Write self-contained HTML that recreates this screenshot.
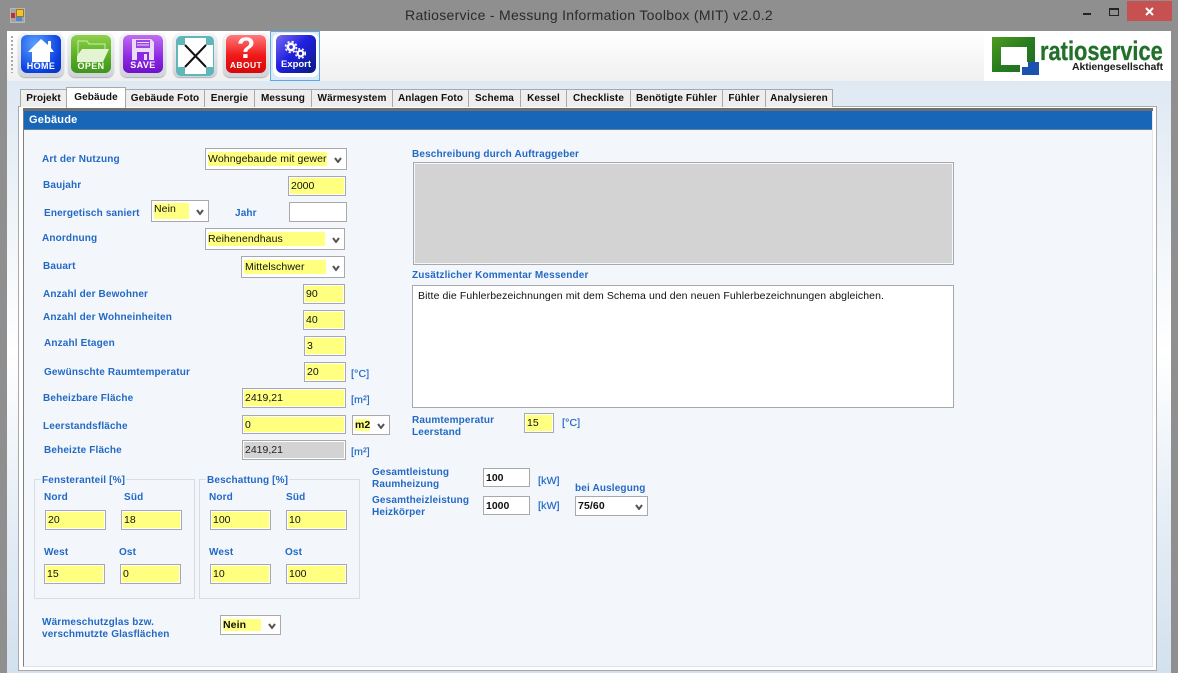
<!DOCTYPE html>
<html lang="de"><head><meta charset="utf-8"><title>Ratioservice</title>
<style>
html,body{margin:0;padding:0}
body{width:1178px;height:673px;overflow:hidden;position:relative;background:#8f8f8f;font-family:"Liberation Sans",sans-serif}
div,span,svg{position:absolute;box-sizing:border-box}
.l{color:#2369c4;font-weight:bold;font-size:10px;line-height:12px;height:12px;white-space:nowrap;letter-spacing:.15px;margin-top:1px}
.u{font-weight:normal;font-size:10.5px;letter-spacing:.2px;-webkit-text-stroke:.2px #2369c4;margin-top:0}
.f{border:1px solid #a9a9ab;background:#fff}
.f b,.f i{position:absolute;left:1px;top:1px;bottom:1px;right:1px;background:#ffff80;font:normal 10.5px/16px "Liberation Sans",sans-serif;color:#111;padding-left:1px;white-space:nowrap;overflow:hidden}
.f i{background:#fff;font-weight:bold;color:#111}
.s{border:1px solid #a9a9ab;background:#fff}
.s b{position:absolute;left:2px;top:3px;bottom:3px;background:#ffff80;font:normal 10.5px/14px "Liberation Sans",sans-serif;color:#111;white-space:nowrap;overflow:hidden;padding-left:0;letter-spacing:.1px}
.s svg{width:8px;height:6px;right:4px;top:8px}
.t{top:89px;height:18px;background:#eeeeee;border:1px solid #a9a9ab;border-bottom:none;color:#111;font-weight:bold;font-size:10px;line-height:18px;text-align:center;white-space:nowrap;letter-spacing:.1px}
.fs{border:1px solid #d9dce0;top:479px;height:120px;width:161px}
.lg{background:#f3f7fc;top:474px;padding:0 1px}
.ic{top:35px;height:38px;border-radius:6px;overflow:hidden}
.w{top:33px;height:44px;border-radius:7px;background:linear-gradient(#f4f4f6,#cfd3da);box-shadow:0 1px 1px #a8afb8}
.it{left:0;right:0;text-align:center;color:#fff;font-weight:bold;font-size:9px;line-height:11px;letter-spacing:.4px;bottom:1px}
</style></head><body>

<!-- title bar -->
<svg style="left:10px;top:8px" width="15" height="15" viewBox="0 0 15 15"><rect x=".5" y=".5" width="14" height="14" fill="#a4a4a4" stroke="#b8b8b8"/><rect x="6.5" y="1.5" width="7" height="7" fill="#f2c230" stroke="#a07a10"/><rect x="1" y="5" width="4" height="5" fill="#c22f2f"/><rect x="6" y="9" width="6" height="4" fill="#4a88d8"/></svg>
<div style="left:0;width:1178px;top:7px;text-align:center;font-size:14px;line-height:17px;color:#2a2a2a;letter-spacing:.3px">Ratioservice - Messung Information Toolbox (MIT) v2.0.2</div>
<div style="left:1083px;top:13px;width:8px;height:2px;background:#222"></div>
<div style="left:1109px;top:8px;width:10px;height:8px;border:1px solid #222;border-top-width:2px"></div>
<div style="left:1127px;top:1px;width:45px;height:20px;background:#c75050"></div>
<svg style="left:1145px;top:7px" width="9" height="9" viewBox="0 0 9 9"><path d="M1 1L8 8M8 1L1 8" stroke="#fff" stroke-width="2"/></svg>

<!-- client -->
<div style="left:7px;top:31px;width:1164px;height:642px;background:linear-gradient(#cfdeed 0,#dfe9f3 8%,#fff 50%,#e6eef6 75%,#d3e1ee 100%)"></div>
<!-- toolbar -->
<div style="left:7px;top:31px;width:977px;height:50px;background:linear-gradient(#ffffff,#f0f0f0)"></div>
<div style="left:11px;top:36px;width:2px;height:37px;background:repeating-linear-gradient(#a9a9a9 0 2px,transparent 2px 4px)"></div>

<!-- HOME -->
<div class="w" style="left:18px;width:46px"></div>
<div class="ic" style="left:21px;width:40px;background:radial-gradient(ellipse at 35% 25%,#5aa2ff,#0a3fe0 70%,#0630b8)">
<svg style="left:0;top:0" width="40" height="38" viewBox="0 0 40 38"><path d="M20 4L27 10V6H30V13L33 17H29V27H11V17H7Z" fill="#fff"/></svg>
<div class="it">HOME</div></div>
<!-- OPEN -->
<div class="w" style="left:68px;width:46px"></div>
<div class="ic" style="left:71px;width:40px;background:linear-gradient(#8fd04a,#55ad22 60%,#3f951a)">
<svg style="left:0;top:0" width="40" height="38" viewBox="0 0 40 38"><path d="M7 22V6H16L18 9H34V14" fill="none" stroke="#cfeeb0" stroke-width="1"/><path d="M11 14H38L32 27H6V21Z" fill="#e4f3d2"/></svg>
<div class="it">OPEN</div></div>
<!-- SAVE -->
<div class="w" style="left:120px;width:46px"></div>
<div class="ic" style="left:123px;width:40px;background:linear-gradient(#c06cf2,#8a28e0 60%,#6f12c8)">
<svg style="left:0;top:0" width="40" height="38" viewBox="0 0 40 38"><path d="M9 4H28L31 7V25H9Z" fill="#eadcf8"/><rect x="13" y="5" width="14" height="8" fill="#9b46e2"/><path d="M14 7.5H26M14 10H26" stroke="#eadcf8"/><rect x="14" y="17" width="12" height="8" fill="#8a28e0"/><rect x="21" y="19" width="3" height="6" fill="#eadcf8"/></svg>
<div class="it" style="bottom:2px">SAVE</div></div>
<!-- X -->
<div class="w" style="left:173px;width:44px"></div>
<div class="ic" style="left:176px;width:38px;top:36px;height:40px;background:#5fb7b9;border-radius:5px">
<svg style="left:0;top:0" width="38" height="40" viewBox="0 0 38 40"><path d="M9 2H30V9H37V31H30V38H9V31H2V9H9Z" fill="#fff"/><path d="M9 9L30 31M30 9L9 31" stroke="#111" stroke-width="2"/></svg></div>
<!-- ABOUT -->
<div class="w" style="left:223px;width:46px"></div>
<div class="ic" style="left:226px;width:40px;background:linear-gradient(#ff7a7a,#f01818 55%,#d80808)">
<div style="left:0;right:0;top:-2px;text-align:center;color:#fff;font-weight:bold;font-size:30px;line-height:31px">?</div>
<div class="it" style="font-size:8.5px;bottom:2px">ABOUT</div></div>
<!-- Export -->
<div style="left:270px;top:31px;width:50px;height:50px;border:1px solid #5fa8ea;background:#d8e9f8"></div>
<div style="left:273px;top:33px;width:46px;height:44px;border-radius:7px;background:#fff"></div>
<div class="ic" style="left:276px;width:40px;background:linear-gradient(135deg,#7a6cf0,#2020e0 45%,#0c1e8c 90%)">
<svg style="left:0;top:0" width="40" height="38" viewBox="0 0 40 38"><circle cx="15" cy="12" r="3.2" fill="none" stroke="#fff" stroke-width="2.6"/><circle cx="15" cy="12" r="5.5" fill="none" stroke="#fff" stroke-width="1.6" stroke-dasharray="2.2 2.2"/><circle cx="24.5" cy="18.5" r="2.8" fill="none" stroke="#fff" stroke-width="2.2"/><circle cx="24.5" cy="18.5" r="4.8" fill="none" stroke="#fff" stroke-width="1.5" stroke-dasharray="2 2"/></svg>
<div class="it" style="letter-spacing:0;font-size:9.5px;bottom:3px">Export</div></div>

<!-- logo -->
<div style="left:984px;top:31px;width:187px;height:50px;background:#fff"></div>
<svg style="left:990px;top:36px" width="52" height="41" viewBox="0 0 52 41"><defs><linearGradient id="g" x1="0" y1="0" x2="1" y2="1"><stop offset="0" stop-color="#4f9a22"/><stop offset=".5" stop-color="#287d1e"/><stop offset="1" stop-color="#1f6a26"/></linearGradient></defs><path d="M2 1H45V26H37V11H11V29H30V36H2Z" fill="url(#g)"/><path d="M32 31H38V26H49V39H32Z" fill="#1b52b0"/></svg>
<div style="left:1040px;top:36px;color:#226f2a;font:bold 27px/30px 'Liberation Sans',sans-serif;white-space:nowrap;transform:scaleX(.81);transform-origin:0 0;-webkit-text-stroke:.3px #226f2a">ratioservice</div>
<div style="left:1072px;top:61px;color:#1c1c1c;font:bold 10.5px/13px 'Liberation Sans',sans-serif;white-space:nowrap;letter-spacing:-.1px">Aktiengesellschaft</div>

<!-- tab page -->
<div style="left:18px;top:106px;width:1139px;height:565px;background:#fff;border:1px solid #a9a9ab"></div>
<div style="left:23px;top:108px;width:1130px;height:559px;background:#f3f7fc;border-left:1px solid #808080;border-bottom:1px solid #dfe2e6;border-right:1px solid #e3e6ea"></div>
<div style="left:23px;top:108px;width:1130px;height:3px;background:#6e6e6e"></div>
<div style="left:24px;top:111px;width:1128px;height:19px;background:#1866b8;border-bottom:1px solid #5e7fa6;color:#fff;font-weight:bold;font-size:11px;line-height:18px;padding-left:5px;letter-spacing:.2px">Gebäude</div>

<!-- tabs -->
<div class="t" style="left:20px;width:47px">Projekt</div>
<div class="t" style="left:125px;width:80px">Gebäude Foto</div>
<div class="t" style="left:204px;width:51px">Energie</div>
<div class="t" style="left:254px;width:58px">Messung</div>
<div class="t" style="left:311px;width:82px">Wärmesystem</div>
<div class="t" style="left:392px;width:77px">Anlagen Foto</div>
<div class="t" style="left:468px;width:53px">Schema</div>
<div class="t" style="left:520px;width:47px">Kessel</div>
<div class="t" style="left:566px;width:65px">Checkliste</div>
<div class="t" style="left:630px;width:93px">Benötigte Fühler</div>
<div class="t" style="left:722px;width:44px">Fühler</div>
<div class="t" style="left:765px;width:68px">Analysieren</div>
<div class="t" style="left:66px;width:60px;top:87px;height:21px;background:#fff;line-height:19px;z-index:2">Gebäude</div>

<!-- left labels -->
<div class="l" style="left:42px;top:153px">Art der Nutzung</div>
<div class="l" style="left:43px;top:179px">Baujahr</div>
<div class="l" style="left:44px;top:207px">Energetisch saniert</div>
<div class="l" style="left:235px;top:207px">Jahr</div>
<div class="l" style="left:42px;top:232px">Anordnung</div>
<div class="l" style="left:43px;top:260px">Bauart</div>
<div class="l" style="left:43px;top:288px">Anzahl der Bewohner</div>
<div class="l" style="left:43px;top:311px">Anzahl der Wohneinheiten</div>
<div class="l" style="left:44px;top:337px">Anzahl Etagen</div>
<div class="l" style="left:44px;top:366px">Gewünschte Raumtemperatur</div>
<div class="l" style="left:43px;top:392px">Beheizbare Fläche</div>
<div class="l" style="left:43px;top:420px">Leerstandsfläche</div>
<div class="l" style="left:44px;top:444px">Beheizte Fläche</div>
<div class="l u" style="left:351px;top:368px">[°C]</div>
<div class="l u" style="left:351px;top:394px">[m²]</div>
<div class="l u" style="left:351px;top:446px">[m²]</div>

<!-- left fields -->
<div class="s" style="left:205px;top:148px;width:142px;height:22px"><b style="width:119px">Wohngebaude mit gewerbe</b><svg viewBox="0 0 8 6"><path d="M1 1L4 5L7 1" fill="none" stroke="#555" stroke-width="2"/></svg></div>
<div class="f" style="left:288px;top:176px;width:58px;height:20px"><b>2000</b></div>
<div class="s" style="left:151px;top:200px;width:58px;height:22px"><b style="width:35px;line-height:13px;top:2px;bottom:2px">Nein</b><svg viewBox="0 0 8 6"><path d="M1 1L4 5L7 1" fill="none" stroke="#555" stroke-width="2"/></svg></div>
<div class="f" style="left:289px;top:202px;width:58px;height:20px"><i></i></div>
<div class="s" style="left:205px;top:228px;width:140px;height:22px"><b style="width:117px">Reihenendhaus</b><svg viewBox="0 0 8 6"><path d="M1 1L4 5L7 1" fill="none" stroke="#555" stroke-width="2"/></svg></div>
<div class="s" style="left:241px;top:256px;width:104px;height:22px"><b style="width:81px;padding-left:1px">Mittelschwer</b><svg viewBox="0 0 8 6"><path d="M1 1L4 5L7 1" fill="none" stroke="#555" stroke-width="2"/></svg></div>
<div class="f" style="left:303px;top:284px;width:42px;height:20px"><b>90</b></div>
<div class="f" style="left:303px;top:310px;width:42px;height:20px"><b>40</b></div>
<div class="f" style="left:304px;top:336px;width:42px;height:20px"><b>3</b></div>
<div class="f" style="left:304px;top:362px;width:42px;height:20px"><b>20</b></div>
<div class="f" style="left:242px;top:388px;width:104px;height:20px"><b>2419,21</b></div>
<div class="f" style="left:242px;top:415px;width:104px;height:19px"><b>0</b></div>
<div class="s" style="left:352px;top:415px;width:38px;height:20px"><b style="width:15px;font-weight:bold;line-height:13px;overflow:visible;letter-spacing:0">m2</b><svg style="top:7px" viewBox="0 0 8 6"><path d="M1 1L4 5L7 1" fill="none" stroke="#555" stroke-width="2"/></svg></div>
<div class="f" style="left:242px;top:440px;width:104px;height:20px"><b style="background:#d3d3d3;color:#222">2419,21</b></div>

<!-- fieldsets -->
<div class="fs" style="left:34px"></div>
<div class="fs" style="left:199px"></div>
<div class="l lg" style="left:41px">Fensteranteil [%]</div>
<div class="l lg" style="left:206px">Beschattung [%]</div>
<div class="l" style="left:44px;top:491px">Nord</div>
<div class="l" style="left:124px;top:491px">Süd</div>
<div class="l" style="left:44px;top:546px">West</div>
<div class="l" style="left:119px;top:546px">Ost</div>
<div class="l" style="left:209px;top:491px">Nord</div>
<div class="l" style="left:286px;top:491px">Süd</div>
<div class="l" style="left:209px;top:546px">West</div>
<div class="l" style="left:285px;top:546px">Ost</div>
<div class="f" style="left:45px;top:510px;width:61px;height:20px"><b>20</b></div>
<div class="f" style="left:121px;top:510px;width:61px;height:20px"><b>18</b></div>
<div class="f" style="left:44px;top:564px;width:61px;height:20px"><b>15</b></div>
<div class="f" style="left:120px;top:564px;width:61px;height:20px"><b>0</b></div>
<div class="f" style="left:210px;top:510px;width:61px;height:20px"><b>100</b></div>
<div class="f" style="left:286px;top:510px;width:61px;height:20px"><b>10</b></div>
<div class="f" style="left:210px;top:564px;width:61px;height:20px"><b>10</b></div>
<div class="f" style="left:286px;top:564px;width:61px;height:20px"><b>100</b></div>

<div class="l" style="left:42px;top:616px">Wärmeschutzglas bzw.</div>
<div class="l" style="left:42px;top:628px">verschmutzte Glasflächen</div>
<div class="s" style="left:220px;top:615px;width:61px;height:20px"><b style="width:38px;font-weight:bold;line-height:13px">Nein</b><svg style="top:7px" viewBox="0 0 8 6"><path d="M1 1L4 5L7 1" fill="none" stroke="#555" stroke-width="2"/></svg></div>

<!-- right -->
<div class="l" style="left:412px;top:148px">Beschreibung durch Auftraggeber</div>
<div style="left:413px;top:162px;width:541px;height:103px;background:#d3d3d3;border:1px solid #a9a9ab;box-shadow:inset 0 0 0 1px #f3f7fc"></div>
<div class="l" style="left:412px;top:269px">Zusätzlicher Kommentar Messender</div>
<div style="left:412px;top:285px;width:542px;height:123px;background:#fff;border:1px solid #a9a9ab"></div>
<div style="left:418px;top:290px;font-size:10.5px;line-height:12px;color:#111;white-space:nowrap;letter-spacing:.1px">Bitte die Fuhlerbezeichnungen mit dem Schema und den neuen Fuhlerbezeichnungen abgleichen.</div>

<div class="l" style="left:412px;top:414px">Raumtemperatur</div>
<div class="l" style="left:412px;top:426px">Leerstand</div>
<div class="f" style="left:524px;top:413px;width:30px;height:20px"><b>15</b></div>
<div class="l u" style="left:562px;top:417px">[°C]</div>

<div class="l" style="left:372px;top:466px">Gesamtleistung</div>
<div class="l" style="left:372px;top:478px">Raumheizung</div>
<div class="l" style="left:372px;top:494px">Gesamtheizleistung</div>
<div class="l" style="left:372px;top:506px">Heizkörper</div>
<div class="f" style="left:483px;top:468px;width:47px;height:19px"><i style="line-height:16px">100</i></div>
<div class="f" style="left:483px;top:496px;width:47px;height:19px"><i style="line-height:16px">1000</i></div>
<div class="l u" style="left:538px;top:475px">[kW]</div>
<div class="l u" style="left:538px;top:500px">[kW]</div>
<div class="l" style="left:575px;top:482px">bei Auslegung</div>
<div class="s" style="left:575px;top:496px;width:73px;height:20px"><b style="width:50px;font-weight:bold;background:#fff;line-height:13px">75/60</b><svg style="top:7px" viewBox="0 0 8 6"><path d="M1 1L4 5L7 1" fill="none" stroke="#555" stroke-width="2"/></svg></div>
</body></html>
